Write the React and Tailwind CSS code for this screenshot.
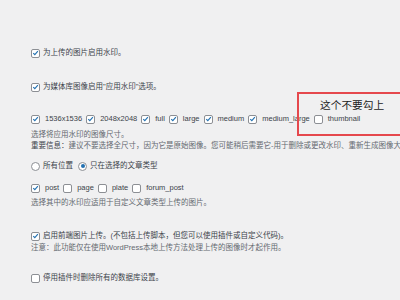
import React from 'react';

const font = { fontFamily: '"Liberation Sans", "Noto Sans CJK SC", sans-serif' };

const Box = ({ checked }) => (
  <span className="inline-flex w-[9px] h-[9px] shrink-0 items-center justify-center rounded-[2px] border border-[#8c8f94] bg-white">
    {checked && (
      <svg viewBox="0 0 10 10" className="w-[8px] h-[8px]">
        <path d="M1.8 5.2 L4 7.4 L8.4 2.2" fill="none" stroke="#2271b1" strokeWidth="1.6" />
      </svg>
    )}
  </span>
);

const Radio = ({ checked }) => (
  <span className="inline-flex w-[9px] h-[9px] shrink-0 items-center justify-center rounded-full border border-[#8c8f94] bg-white">
    {checked && <span className="w-[4px] h-[4px] rounded-full bg-[#2271b1]" />}
  </span>
);

const Opt = ({ checked, label }) => (
  <span className="flex items-center gap-[5px] mr-[4px]">
    <Box checked={checked} />
    <span>{label}</span>
  </span>
);

const App = () => {
  const sizes = [
    ['1536x1536', true],
    ['2048x2048', true],
    ['full', true],
    ['large', true],
    ['medium', true],
    ['medium_large', true],
    ['thumbnail', false],
  ];
  const types = [
    ['post', true],
    ['page', false],
    ['plate', false],
    ['forum_post', false],
  ];

  return (
    <div className="relative w-[400px] h-[300px] overflow-hidden bg-[#f0f0f1] text-[#3c434a] text-[7.5px]" style={font}>
      <div className="flex flex-col pl-[31px] pt-[47px] whitespace-nowrap">
        <div className="h-[12px] flex items-center gap-[3px]">
          <Box checked />
          <span>为上传的图片启用水印。</span>
        </div>
        <div className="h-[12px] mt-[22px] flex items-center gap-[3px]">
          <Box checked />
          <span>为媒体库图像启用"应用水印"选项。</span>
        </div>
        <div className="h-[12px] mt-[20px] flex items-center">
          {sizes.map(([l, c]) => (
            <Opt key={l} label={l} checked={c} />
          ))}
        </div>
        <div className="h-[10px] mt-[5px] flex items-center text-[#646970]">选择将应用水印的图像尺寸。</div>
        <div className="h-[10px] mt-[1px] flex items-center text-[#646970]">
          <span className="text-[#3c434a]">重要信息：</span>建议不要选择全尺寸，因为它是原始图像。您可能稍后需要它-用于删除或更改水印、重新生成图像大小等。
        </div>
        <div className="h-[12px] mt-[9px] flex items-center">
          <span className="flex items-center gap-[3px] mr-[5px]">
            <Radio />
            <span>所有位置</span>
          </span>
          <span className="flex items-center gap-[3px]">
            <Radio checked />
            <span>只在选择的文章类型</span>
          </span>
        </div>
        <div className="h-[12px] mt-[10px] flex items-center">
          {types.map(([l, c]) => (
            <Opt key={l} label={l} checked={c} />
          ))}
        </div>
        <div className="h-[10px] mt-[4px] flex items-center text-[#646970]">选择其中的水印应适用于自定义文章类型上传的图片。</div>
        <div className="h-[12px] mt-[22px] flex items-center gap-[3px]">
          <Box checked />
          <span>启用前端图片上传。(不包括上传脚本，但您可以使用插件或自定义代码)。</span>
        </div>
        <div className="h-[10px] mt-[1px] flex items-center text-[#646970]">注意：此功能仅在使用WordPress本地上传方法处理上传的图像时才起作用。</div>
        <div className="h-[12px] mt-[19px] flex items-center gap-[3px]">
          <Box />
          <span>停用插件时删除所有的数据库设置。</span>
        </div>
      </div>
      <div className="absolute left-[297px] top-[92px] w-[120px] h-[44px] border-2 border-[#e5484d] flex justify-start pl-[21px] pt-[3px]">
        <span className="text-[10.7px] text-[#222]" style={{ fontFamily: '"Noto Sans CJK SC", sans-serif' }}>这个不要勾上</span>
      </div>
    </div>
  );
};

export default App;
